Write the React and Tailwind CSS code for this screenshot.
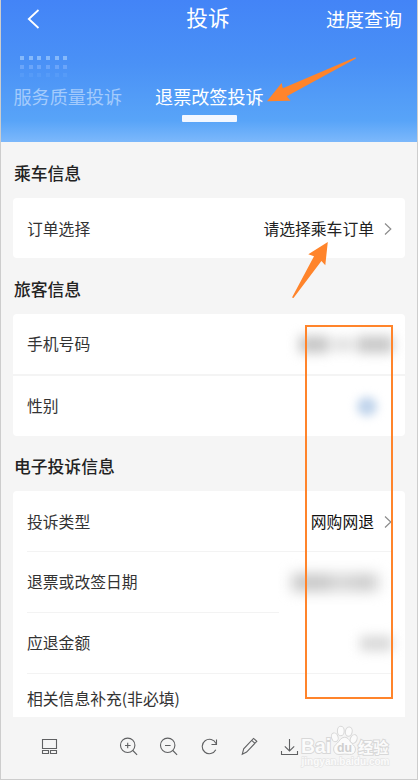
import { clsx } from 'clsx';

const dotRows = [
  { id: 'top', tone: 'bg-[#86b9fb]' },
  { id: 'mid', tone: 'bg-[#6ba5fa]' },
  { id: 'low', tone: 'bg-[#569bf8]' },
];

function Chevron() {
  return (
    <svg width="8" height="14" viewBox="0 0 8 14" fill="none" stroke="#8c8c8c" strokeWidth="1.2" className="ml-[10px] shrink-0">
      <path d="M1 1.5 6.8 7 1 12.5" />
    </svg>
  );
}

function SectionTitle({ children }) {
  return <h2 className="pl-px text-[16.8px] font-medium leading-[20px] text-[#222]">{children}</h2>;
}

function Row({ label, className, children }) {
  return (
    <div className={clsx('flex items-center justify-between text-[15.8px] leading-[20px] text-[#333]', className)}>
      <span>{label}</span>
      {children}
    </div>
  );
}

function Header() {
  return (
    <header className="h-[142px] bg-[linear-gradient(180deg,#4384f7_0%,#4a91f6_45%,#58a4f8_85%,#7cb8fb_100%)] text-white">
      <div className="flex h-[37px] items-center justify-between pl-[26px] pr-[15px]">
        <svg width="14" height="20" viewBox="0 0 14 20" fill="none" stroke="currentColor" strokeWidth="1.8" className="mr-[49px]">
          <path d="M11.5 1 1.8 10l9.7 9" />
        </svg>
        <h1 className="pb-[3px] text-[21.7px] leading-[30px]">投诉</h1>
        <span className="text-[19px] leading-[28px]">进度查询</span>
      </div>

      <div className="mt-[19px] flex flex-col gap-[4.5px] pl-[19px]">
        {dotRows.map((row) => (
          <div key={row.id} className="flex gap-[4.7px]">
            {[0, 1, 2, 3, 4, 5].map((n) => (
              <i key={n} className={clsx('h-1 w-1', row.tone)} />
            ))}
          </div>
        ))}
      </div>

      <nav className="mt-[7px] flex gap-[33px] pl-[12.5px] text-[18.1px] leading-[24px]">
        <span className="text-[#a4cbfc]">服务质量投诉</span>
        <div className="flex flex-col items-center">
          <span>退票改签投诉</span>
          <i className="mt-[7px] h-[7px] w-[55px] rounded-[1px] bg-[#f3f7ff]" />
        </div>
      </nav>
    </header>
  );
}

function Toolbar() {
  return (
    <footer className="relative flex h-[62px] items-center">
      <svg width="416" height="62" viewBox="1 717 416 62" fill="none" stroke="#5f6062" strokeWidth="1.1" className="shrink-0">
        {/* layout */}
        <path d="M42.5 739.5h14v9h-14zM42.5 750.5h6v3h-6zM50.5 750.5h6v3h-6z" />
        {/* zoom in */}
        <circle cx="127.7" cy="745.3" r="7.2" />
        <path d="m132.8 750.5 4.3 4.3M125 745.5h5.6M127.7 742.7v5.6" />
        {/* zoom out */}
        <circle cx="167.7" cy="745.3" r="7.2" />
        <path d="m172.8 750.5 4.3 4.3M165 745.5h5.6" />
        {/* rotate */}
        <path d="M215.8 749.8a7.2 7.2 0 1 1 .2-6.2M216.5 739.5v5h-5" />
        {/* pencil */}
        <path d="m242.3 754.2 1.4-5.4 9.8-10.4 3.3 2.9-10.2 10.8-4.3 2.1ZM251.7 740.4l3.3 3" />
        {/* download */}
        <path d="M289.5 739v11.7M284.8 746.3l4.7 4.6 4.7-4.6M281.5 751v3.5h16V751" />
      </svg>
      <Watermark />
    </footer>
  );
}

function Watermark() {
  return (
    <svg width="96" height="46" viewBox="298 724 96 46" className="absolute left-[297px] top-[7px] font-['Liberation_Sans',sans-serif]">
      <g fill="#fbfbfb" stroke="#d8d8d8" strokeWidth="1">
        <ellipse cx="334.8" cy="737.3" rx="3.3" ry="4.5" transform="rotate(-18 334.8 737.3)" />
        <ellipse cx="340.8" cy="731" rx="3.4" ry="4.7" />
        <ellipse cx="348.8" cy="731.6" rx="3.4" ry="4.7" transform="rotate(10 348.8 731.6)" />
        <ellipse cx="353.7" cy="739" rx="3.3" ry="4.5" transform="rotate(22 353.7 739)" />
        <path d="M344.6 737.3c-4 0-4.8 3.6-7.3 5.8-2.8 2.4-4.1 4.1-3.6 6.9.6 3.6 3.3 4.7 6.3 4.4 3.5-.4 6-.4 9.5 0 3.1.4 5.5-1.2 5.9-4.2.4-2.9-1.2-4.5-3.7-6.9-2.3-2.2-3.2-6-7.1-6Z" />
        <g strokeWidth="2" paintOrder="stroke">
          <text x="301" y="753.3" fontSize="20" fontWeight="700" textLength="30" lengthAdjust="spacingAndGlyphs">Bai</text>
          <text x="358" y="752.8" fontSize="15.2" fontWeight="700" textLength="30.4" lengthAdjust="spacingAndGlyphs" fontFamily="Noto Sans CJK SC, sans-serif">经验</text>
        </g>
      </g>
      <text x="337" y="752.3" fontSize="13" fontWeight="700" fill="#cfcfcf" textLength="15" lengthAdjust="spacingAndGlyphs">du</text>
      <text x="301.5" y="764.5" fontSize="10" fontWeight="700" fill="#fbfbfb" stroke="#e5e5e5" strokeWidth="1.4" paintOrder="stroke" textLength="88" lengthAdjust="spacingAndGlyphs">jingyan.baidu.com</text>
    </svg>
  );
}

function Annotations() {
  return (
    <>
      <div className="pointer-events-none absolute left-[304px] top-[325px] h-[374px] w-[88px] border-2 border-[#ff842b]" />
      <svg width="417" height="310" viewBox="1 0 417 310" fill="#ff842b" className="pointer-events-none absolute left-0 top-0">
        <path d="M355.5 57.2 282.8 88.2 281.6 83 267 101.2 290.5 100.8 286.8 96.2 356 58.5Z" />
        <path d="M327.8 242 308.3 254.3 314 256.3 292 297.5 293.5 298 321.4 261 325.3 265.2Z" />
      </svg>
    </>
  );
}

export default function App() {
  return (
    <div className="relative h-[780px] w-[418px] overflow-hidden border-x border-b border-[#cdcdcd] bg-[#f5f5f5] font-['Noto_Sans_CJK_SC',sans-serif]">
      <Header />

      <main className="flex h-[575px] flex-col pl-3 pr-3 pt-[21px]">
        <SectionTitle>乘车信息</SectionTitle>
        <section className="mt-[15px] rounded bg-white pl-[14px] pr-[13px]">
          <Row label="订单选择" className="h-[60px] pt-px">
            <span className="ml-auto text-[#222]">请选择乘车订单</span>
            <Chevron />
          </Row>
        </section>

        <div className="mt-[21px]">
          <SectionTitle>旅客信息</SectionTitle>
        </div>
        <section className="mt-[15px] rounded-sm bg-white">
          <Row label="手机号码" className="h-[62px] border-b-2 border-[#f4f4f4] pl-[14px] pr-[12px]">
            <div className="flex items-center gap-1 blur-[6px]">
              <i className="h-[17px] w-[30px] bg-[#c6c6c6]" />
              <i className="h-[13px] w-[20px] bg-[#dedede]" />
              <i className="h-[17px] w-[36px] bg-[#c8c8c8]" />
            </div>
          </Row>
          <Row label="性别" className="h-[60px] pl-[14px] pr-[28px]">
            <i className="h-[19px] w-[20px] rounded-full bg-[#bfd3eb] blur-[5px]" />
          </Row>
        </section>

        <div className="mt-[20px]">
          <SectionTitle>电子投诉信息</SectionTitle>
        </div>
        <section className="mt-[15px] flex-1 rounded-t bg-white pl-[14px] pr-[13px]">
          <Row label="投诉类型" className="h-[61px] border-b border-[#f3f3f3] pt-px">
            <span className="ml-auto text-[#111]">网购网退</span>
            <Chevron />
          </Row>
          <div className="h-[61px]">
            <Row label="退票或改签日期" className="h-[60px]">
              <div className="mr-[14px] flex blur-[7px]">
                <i className="h-[17px] w-[38px] bg-[#c4c4c4]" />
                <i className="h-[17px] w-[22px] bg-[#d4d4d4]" />
                <i className="h-[17px] w-[26px] bg-[#cbcbcb]" />
              </div>
            </Row>
            <div className="h-px w-[252px] bg-[#f3f3f3]" />
          </div>
          <Row label="应退金额" className="h-[61px] border-b border-[#f3f3f3]">
            <i className="h-[15px] w-[32px] bg-[#d8d8d8] blur-[6px]" />
          </Row>
          <Row label="相关信息补充(非必填)" className="h-[43px] pt-[7px]" />
        </section>
      </main>

      <Toolbar />
      <Annotations />
    </div>
  );
}
